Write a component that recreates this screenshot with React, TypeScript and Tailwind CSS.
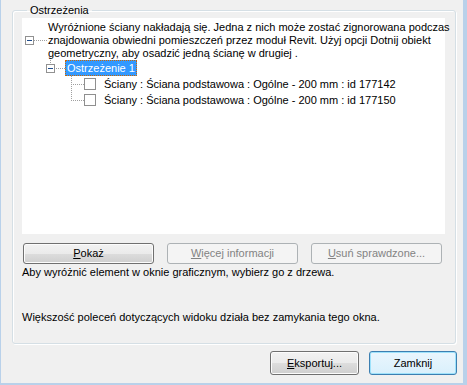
import React from "react";

const font = { fontFamily: '"Liberation Sans", Arial, sans-serif' };

function MinusBox() {
  return (
    <>
      <rect x="0.5" y="0.5" width="8" height="8" fill="#ffffff" stroke="#919191" />
      <line x1="2" y1="4.5" x2="7" y2="4.5" stroke="#1e4c8c" />
    </>
  );
}

function Btn({
  children,
  w,
  h,
  disabled,
  def,
}: {
  children: React.ReactNode;
  w: string;
  h: string;
  disabled?: boolean;
  def?: boolean;
}) {
  if (disabled) {
    return (
      <div
        className={`${w} ${h} flex items-center justify-center rounded-[3px] border border-[#adb2b5] bg-[#f4f4f4] text-[#838383] text-[11px]`}
      >
        {children}
      </div>
    );
  }
  if (def) {
    return (
      <div
        className={`${w} ${h} flex items-center justify-center rounded-[3px] border border-[#3c7fb1] bg-gradient-to-b from-[#eaf6fd] to-[#d9f0fc] shadow-[inset_0_0_0_1px_#9ee2fb] text-black text-[11px]`}
      >
        {children}
      </div>
    );
  }
  return (
    <div
      className={`${w} ${h} flex items-center justify-center rounded-[3px] border border-[#707070] bg-[linear-gradient(#f2f2f2_0%,#ebebeb_50%,#dddddd_51%,#cfcfcf_100%)] shadow-[inset_0_0_0_1px_#fcfcfc] text-black text-[11px]`}
    >
      {children}
    </div>
  );
}

export default function App() {
  return (
    <div
      style={font}
      className="w-[467px] h-[385px] box-border bg-[#f0f0f0] border-l border-r-4 border-b-2 border-[#b9d1ea] text-[11px] leading-[13px] text-black overflow-hidden"
    >
      <fieldset className="ml-[11px] mt-[4px] w-[444px] h-[340px] box-border border border-[#d5dfe5] rounded-[3px] pl-[9px] shadow-[inset_1px_1px_0_#ffffff,1px_1px_0_#ffffff]">
        <legend className="ml-[5px] px-[3px] leading-[13px]">Ostrzeżenia</legend>
        <div className="mt-[1px] w-[423px] h-[216px] bg-white pt-[2px]">
          {/* Row A */}
          <div className="flex items-center h-[40px]">
            <svg width="26" height="9" className="shrink-0">
              <g transform="translate(3,0)">
                <MinusBox />
              </g>
              <line x1="12" y1="4.5" x2="26" y2="4.5" stroke="#a0a0a0" strokeDasharray="1 1" />
            </svg>
            <div className="whitespace-nowrap leading-[13px]">
              Wyróżnione ściany nakładają się. Jedna z nich może zostać zignorowana podczas
              <br />
              znajdowania obwiedni pomieszczeń przez moduł Revit. Użyj opcji Dotnij obiekt
              <br />
              geometryczny, aby osadzić jedną ścianę w drugiej .
            </div>
          </div>
          {/* Row B */}
          <div className="flex items-center h-[16px] pl-[24px]">
            <svg width="19" height="16" className="shrink-0">
              <line x1="4.5" y1="0" x2="4.5" y2="4" stroke="#a0a0a0" strokeDasharray="1 1" />
              <g transform="translate(0,4)">
                <MinusBox />
              </g>
              <line x1="10" y1="8.5" x2="19" y2="8.5" stroke="#a0a0a0" strokeDasharray="1 1" />
            </svg>
            <div className="h-[16px] flex items-center px-[2px] bg-[#3399ff] text-white outline outline-1 outline-dotted outline-[#cc6600] -outline-offset-1 whitespace-nowrap">
              Ostrzeżenie 1
            </div>
          </div>
          {/* Rows C, D */}
          {[
            { id: "177142", last: false },
            { id: "177150", last: true },
          ].map((r) => (
            <div key={r.id} className="flex items-center h-[16px] pl-[42px]">
              <svg width="20" height="16" className="shrink-0">
                <line
                  x1="7.5"
                  y1="0"
                  x2="7.5"
                  y2={r.last ? 9 : 16}
                  stroke="#a0a0a0"
                  strokeDasharray="1 1"
                />
                <line x1="9" y1="8.5" x2="20" y2="8.5" stroke="#a0a0a0" strokeDasharray="1 1" />
              </svg>
              <div className="w-[12px] h-[12px] box-border border border-[#8f8f8f] bg-white shrink-0" />
              <div className="ml-[8px] whitespace-nowrap">
                Ściany : Ściana podstawowa : Ogólne - 200 mm : id {r.id}
              </div>
            </div>
          ))}
        </div>
        <div className="flex mt-[9px] ml-[1px] gap-[13px] h-[21px]">
          <Btn w="w-[131px]" h="h-[21px]">
            <span>
              <span className="underline">P</span>okaż
            </span>
          </Btn>
          <Btn w="w-[131px]" h="h-[21px]" disabled>
            <span>
              <span className="underline">W</span>ięcej informacji
            </span>
          </Btn>
          <Btn w="w-[131px]" h="h-[21px]" disabled>
            <span>
              <span className="underline">U</span>suń sprawdzone...
            </span>
          </Btn>
        </div>
        <div className="mt-[2px] h-[13px] whitespace-nowrap">
          Aby wyróżnić element w oknie graficznym, wybierz go z drzewa.
        </div>
        <div className="mt-[32px] h-[13px] whitespace-nowrap">
          Większość poleceń dotyczących widoku działa bez zamykania tego okna.
        </div>
      </fieldset>
      <div className="flex justify-end gap-[10px] mt-[7px] pr-[6px]">
        <Btn w="w-[89px]" h="h-[24px]">
          <span>
            <span className="underline">E</span>ksportuj...
          </span>
        </Btn>
        <Btn w="w-[88px]" h="h-[24px]" def>
          Zamknij
        </Btn>
      </div>
    </div>
  );
}
